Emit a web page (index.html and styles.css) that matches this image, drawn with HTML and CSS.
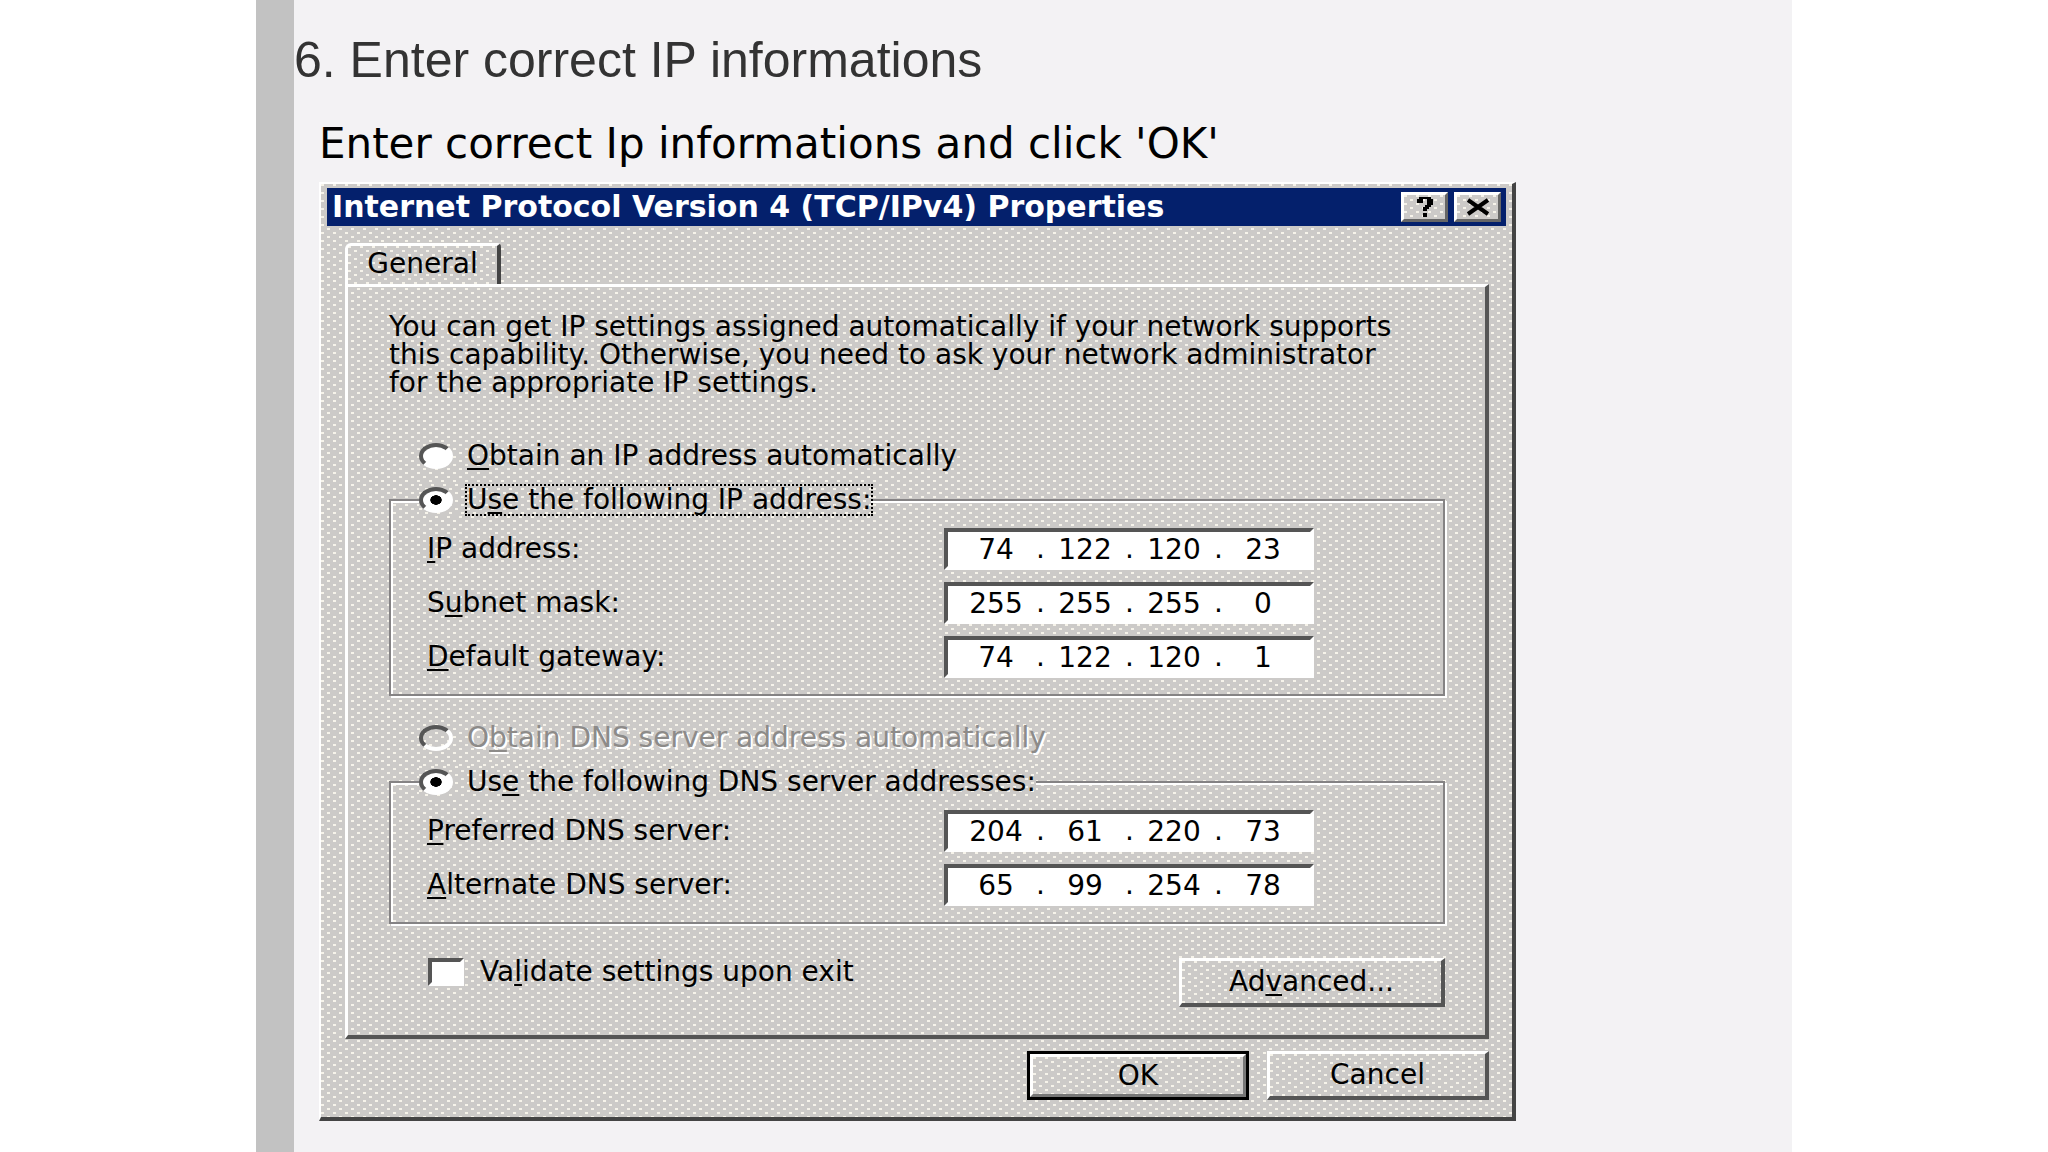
FILE: index.html
```html
<!DOCTYPE html>
<html lang="en">
<head>
    <meta charset="UTF-8">
    <meta name="viewport" content="width=device-width, initial-scale=1.0">
    <title>Enter correct IP informations</title>
    <link rel="stylesheet" href="styles.css">
</head>
<body>
    <main class="page">
        <h1>6. Enter correct IP informations</h1>
        <div class="step">
            <p class="hint">Enter correct Ip informations and click 'OK'</p>

            <form class="dialog">
                <div class="titlebar">
                    <h2>Internet Protocol Version 4 (TCP/IPv4) Properties</h2>
                    <button type="button" class="title-button" aria-label="Help">
                        <svg width="20" height="20" viewBox="0 0 10 10" shape-rendering="crispEdges">
                            <path d="M2 0h6v1h1v3h-1v1h-1v1h-1v1h-2v-2h1v-1h1v-3h-2v2h-3v-2h1zM4 8h2v2h-2z"/>
                        </svg>
                    </button>
                    <button type="button" class="title-button" aria-label="Close">
                        <svg width="24" height="18" viewBox="0 0 24 18">
                            <path d="M2 2L22 16M22 2L2 16" stroke="#000" stroke-width="4"/>
                        </svg>
                    </button>
                </div>

                <button type="button" class="tab">General</button>
                <div class="panel">
                    <p class="about">You can get IP settings assigned automatically if your network supports<br>this capability. Otherwise, you need to ask your network administrator<br>for the appropriate IP settings.</p>

                    <label class="choice"><input type="radio" name="ip"><span><u>O</u>btain an IP address automatically</span></label>
                    <fieldset class="group">
                        <legend><label class="choice"><input type="radio" name="ip" checked><span class="focused">U<u>s</u>e the following IP address:</span></label></legend>
                        <div class="row">
                            <label for="ip1"><u>I</u>P address:</label>
                            <div class="address">
                                <input id="ip1" value="74"><span>.</span><input aria-label="IP address 2" value="122"><span>.</span><input aria-label="IP address 3" value="120"><span>.</span><input aria-label="IP address 4" value="23">
                            </div>
                        </div>
                        <div class="row">
                            <label for="mask1">S<u>u</u>bnet mask:</label>
                            <div class="address">
                                <input id="mask1" value="255"><span>.</span><input aria-label="Subnet mask 2" value="255"><span>.</span><input aria-label="Subnet mask 3" value="255"><span>.</span><input aria-label="Subnet mask 4" value="0">
                            </div>
                        </div>
                        <div class="row">
                            <label for="gate1"><u>D</u>efault gateway:</label>
                            <div class="address">
                                <input id="gate1" value="74"><span>.</span><input aria-label="Default gateway 2" value="122"><span>.</span><input aria-label="Default gateway 3" value="120"><span>.</span><input aria-label="Default gateway 4" value="1">
                            </div>
                        </div>
                    </fieldset>

                    <label class="choice disabled"><input type="radio" name="dns" disabled><span>O<u>b</u>tain DNS server address automatically</span></label>
                    <fieldset class="group">
                        <legend><label class="choice"><input type="radio" name="dns" checked><span>Us<u>e</u> the following DNS server addresses:</span></label></legend>
                        <div class="row">
                            <label for="dns1"><u>P</u>referred DNS server:</label>
                            <div class="address">
                                <input id="dns1" value="204"><span>.</span><input aria-label="Preferred DNS 2" value="61"><span>.</span><input aria-label="Preferred DNS 3" value="220"><span>.</span><input aria-label="Preferred DNS 4" value="73">
                            </div>
                        </div>
                        <div class="row">
                            <label for="alt1"><u>A</u>lternate DNS server:</label>
                            <div class="address">
                                <input id="alt1" value="65"><span>.</span><input aria-label="Alternate DNS 2" value="99"><span>.</span><input aria-label="Alternate DNS 3" value="254"><span>.</span><input aria-label="Alternate DNS 4" value="78">
                            </div>
                        </div>
                    </fieldset>

                    <div class="bottom">
                        <label class="validate"><input type="checkbox"><span>Va<u>l</u>idate settings upon exit</span></label>
                        <button type="button" class="button advanced">Ad<u>v</u>anced...</button>
                    </div>
                </div>

                <div class="actions">
                    <button type="button" class="button ok">OK</button>
                    <button type="button" class="button">Cancel</button>
                </div>
            </form>
        </div>
    </main>
</body>
</html>
```

FILE: styles.css
```css
* {
    box-sizing: border-box;
}
body {
    margin: 0;
    background-color: #fff;
    color: #000;
    font-family: "DejaVu Sans", Verdana, sans-serif;
    font-size: 28px;
    line-height: 28px;
}
.page {
    width: 75%;
    min-height: 100vh;
    margin: 0 auto;
    padding: 30px 0;
    border-left: 38px solid #c2c2c2;
    background-color: #f3f2f4;
}
h1 {
    margin: 0;
    color: #333;
    font-family: "Liberation Sans", Arial, sans-serif;
    font-size: 50px;
    font-weight: normal;
    line-height: 60px;
}
.step {
    padding: 34px 0 0 25px;
}
.hint {
    margin: 0 0 18px;
    font-size: 42px;
    line-height: 40px;
}
/* dithered window colour */
.dialog, .tab, .button, .title-button, .group legend {
    background-color: #cccac8;
    background-image:
        conic-gradient(from 270deg at 3px 2px, #f6f3ea 90deg, transparent 0),
        conic-gradient(from 270deg at 3px 2px, #f6f3ea 90deg, transparent 0);
    background-position: 0 0, 6px 4px;
    background-size: 12px 8px;
}
.dialog {
    max-width: 1197px;
    padding: 4px 6px 17px;
    border: 2px solid #fff;
    border-right: 4px solid #444;
    border-bottom: 4px solid #444;
}
.titlebar {
    display: flex;
    align-items: center;
    gap: 6px;
    height: 38px;
    padding: 0 5px;
    background-color: #04206c;
}
h2 {
    flex: 1;
    margin: 0;
    color: #fff;
    font-size: 30px;
    line-height: 36px;
    white-space: nowrap;
}
button {
    padding: 0;
    color: #000;
    font: inherit;
}
.title-button {
    display: flex;
    align-items: center;
    justify-content: center;
    width: 47px;
    height: 30px;
    border: 3px solid #fff;
    border-right-color: #666;
    border-bottom-color: #666;
}
.tab {
    display: block;
    width: 156px;
    height: 41px;
    margin: 17px 0 0 18px;
    padding-bottom: 2px;
    border: 3px solid #fff;
    border-right: 4px solid #444;
    border-bottom: 0;
    border-radius: 6px 4px 0 0;
}
.panel {
    margin: 0 17px 0 18px;
    padding: 26px 40px 28px 41px;
    border: 3px solid #fff;
    border-right: 4px solid #555;
    border-bottom: 4px solid #555;
}
.about {
    margin: 0 0 43px;
    white-space: nowrap;
}
.choice {
    display: flex;
    align-items: center;
    gap: 14px;
    height: 32px;
    margin-left: 30px;
}
.choice input {
    width: 34px;
    height: 26px;
    margin: 0;
    appearance: none;
    border: 4px solid #fff;
    border-top-color: #555;
    border-left-color: #555;
    border-radius: 50%;
    background-color: #fff;
}
.choice input:checked {
    background-image: radial-gradient(6px 5px, #000 90%, transparent);
}
.focused {
    outline: 2px dotted #000;
}
.disabled {
    margin-top: 26px;
    color: #8d8b89;
    text-shadow: 2px 2px #fff;
}
.choice input:disabled {
    background-color: transparent;
}
/* etched frame */
.group {
    display: flex;
    flex-direction: column;
    gap: 12px;
    min-width: 0;
    margin: 12px 0 0;
    padding: 12px 36px 16px;
    border: 2px solid #858384;
    box-shadow: 2px 2px #fff, inset 2px 2px #fff;
}
.group legend {
    margin-left: -8px;
    padding: 0;
}
.group legend .choice {
    margin: 0;
}
.row {
    display: flex;
    align-items: center;
}
.row label {
    width: 517px;
}
.address {
    display: flex;
    align-items: center;
    width: 370px;
    height: 42px;
    padding-left: 12px;
    border: 4px solid #fff;
    border-top-color: #555;
    border-left-color: #555;
    background-color: #fff;
}
.address input {
    width: 72px;
    padding: 0;
    border: 0;
    background: none;
    font: inherit;
    text-align: center;
}
.address span {
    width: 17px;
    text-align: center;
}
.bottom {
    display: flex;
    align-items: flex-start;
    justify-content: space-between;
    margin-top: 34px;
}
.validate {
    display: flex;
    align-items: center;
    gap: 16px;
    margin-left: 39px;
}
.validate input {
    width: 36px;
    height: 28px;
    margin: 0;
    appearance: none;
    border: 4px solid #fff;
    border-top-color: #555;
    border-left-color: #555;
    background-color: #fff;
}
.button {
    width: 222px;
    height: 49px;
    border: 3px solid #fff;
    border-right: 4px solid #555;
    border-bottom: 4px solid #555;
}
.advanced {
    width: 266px;
}
.actions {
    display: flex;
    justify-content: flex-end;
    gap: 18px;
    margin: 12px 17px 0 0;
}
.ok {
    outline: 3px solid #000;
    outline-offset: -3px;
    border-width: 6px;
    border-right-color: #777;
    border-bottom-color: #777;
}
u {
    text-decoration-thickness: 2px;
    text-underline-offset: 3px;
}
```
